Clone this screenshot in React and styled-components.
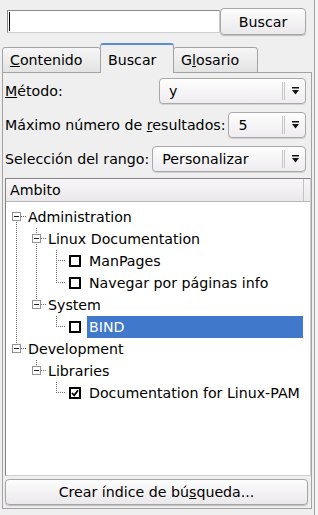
import styled, { createGlobalStyle } from "styled-components";

const GlobalStyle = createGlobalStyle`
  html, body {
    margin: 0;
    padding: 0;
    background: #efefef;
  }
  body {
    font-family: "DejaVu Sans", Verdana, sans-serif;
    font-size: 14.2px;
    color: #000;
  }
`;

const Page = styled.div`
  display: flex;
  width: 318px;
  height: 515px;
  overflow: hidden;
  background: #efefef;
`;
const Main = styled.div`
  width: 314px;
  height: 100%;
  display: flex;
  flex-direction: column;
  padding-left: 2px;
  box-sizing: border-box;
`;
const Splitter = styled.div`
  flex: 1;
  border-left: 1px solid #a3a3a3;
  background: #f4f4f4;
`;

const SearchRow = styled.div`
  display: flex;
  align-items: center;
  margin-top: 8px;
  padding-left: 5px;
  height: 27px;
`;
const SearchInput = styled.div`
  width: 213px;
  height: 23px;
  box-sizing: border-box;
  background: #fff;
  border: 1px solid;
  border-color: #8a8a8a #cfcfcf #cfcfcf #8a8a8a;
  padding-left: 1px;
  display: flex;
  align-items: center;
`;
const Caret = styled.span`
  width: 1px;
  height: 19px;
  background: #000;
`;
const Button = styled.button`
  width: ${(p) => p.$w || "auto"};
  height: ${(p) => p.$h || 27}px;
  box-sizing: border-box;
  border: 1px solid #a6a6a6;
  border-radius: 4px;
  background: linear-gradient(#fdfdfd, #ebe8eb);
  box-shadow: 0 1px 1px rgba(0, 0, 0, 0.22);
  font: inherit;
  color: #000;
  padding: 0;
`;

const TabBar = styled.div`
  display: flex;
  align-items: flex-end;
  margin-top: 8px;
  height: 30px;
  margin-bottom: -1px;
  position: relative;
  z-index: 1;
`;
const Tab = styled.div`
  width: ${(p) => p.$w}px;
  box-sizing: border-box;
  margin-left: ${(p) => (p.$first ? 0 : -1)}px;
  padding-left: 7px;
  line-height: 24px;
  border: 1px solid #a3a3a3;
  border-radius: 3px 3px 0 0;
  background: linear-gradient(#f6f6f6, #e3e3e3);
  white-space: nowrap;

  ${(p) =>
    p.$active &&
    `
    border-top: 2px solid #5a8edb;
    border-bottom: none;
    padding-top: 3px;
    padding-bottom: 1px;
    background: #efefef;
    position: relative;
    z-index: 2;
  `}
`;

const Panel = styled.div`
  flex: 1;
  width: 310px;
  margin-bottom: 6px;
  box-sizing: border-box;
  border: 1px solid #a3a3a3;
  padding: 5px 0 3px 2px;
  display: flex;
  flex-direction: column;
`;
const Form = styled.div`
  display: flex;
  flex-direction: column;
  gap: 8px;
`;
const FormRow = styled.div`
  display: flex;
  align-items: center;
  height: 26px;
`;
const Label = styled.span`
  white-space: nowrap;
`;
const Acc = styled.span`
  text-decoration: underline;
`;
const Combo = styled.div`
  display: flex;
  align-items: center;
  height: 26px;
  box-sizing: border-box;
  margin-left: ${(p) => (p.$w ? "auto" : "3px")};
  margin-right: 5px;
  width: ${(p) => (p.$w ? `${p.$w}px` : "auto")};
  flex: ${(p) => (p.$w ? "none" : 1)};
  border: 1px solid #a8a8a8;
  border-radius: 4px;
  background: linear-gradient(#fefefe, #efecef);
  box-shadow: 0 1px 0 rgba(0, 0, 0, 0.12);
  padding-left: 9px;
`;
const ComboText = styled.span`
  flex: 1;
  white-space: nowrap;
`;
const ComboSep = styled.span`
  width: 1px;
  height: 18px;
  border-left: 1px solid #c6c6c6;
  border-right: 1px solid #c6c6c6;
`;
const ArrowBox = styled.span`
  width: 20px;
  display: flex;
  justify-content: center;
  align-items: center;
`;

const ListView = styled.div`
  flex: 1;
  margin-top: 6px;
  border: 1px solid;
  border-color: #848484 #cfcfcf #cfcfcf #848484;
  background: #fff;
  display: flex;
  flex-direction: column;
  overflow: hidden;
`;
const ListHeader = styled.div`
  display: flex;
  height: 22px;
  border-bottom: 1px solid #b9b9b9;
  background: linear-gradient(#f8f6f8, #ebe8eb);
`;
const HeaderCell = styled.div`
  flex: 1;
  padding-left: 4px;
  line-height: 22px;
  border-right: 1px solid #c2c2c2;
`;
const HeaderFill = styled.div`
  width: 6px;
`;
const TreeBody = styled.div`
  padding-top: 4px;
`;
const TreeRow = styled.div`
  display: flex;
  align-items: center;
  height: 22px;
`;
const Check = styled.span`
  width: 12px;
  height: 12px;
  box-sizing: border-box;
  border: 2px solid #000;
  background: #fff;
  margin-left: 3px;
  flex-shrink: 0;
  display: flex;
  align-items: center;
  justify-content: center;
`;
const ItemText = styled.span`
  line-height: 22px;
  white-space: nowrap;
  margin-left: ${(p) => (p.$leaf ? 6 : 2)}px;
  margin-right: 7px;
  padding: 0 2px 0 ${(p) => (p.$leaf ? 2 : 0)}px;
  flex: ${(p) => (p.$sel ? 1 : "none")};
  background: ${(p) => (p.$sel ? "#4078cb" : "transparent")};
  color: ${(p) => (p.$sel ? "#fff" : "#000")};
`;
const BottomButton = styled(Button)`
  margin-top: 3px;
  margin-right: 3px;
`;

const DOT = "#666";

const Branch = ({ kind, up, down }) => (
  <svg width="20" height="22" style={{ flexShrink: 0, display: "block" }}>
    {kind === "guide" && (
      <line x1="10.5" y1="0" x2="10.5" y2="22" stroke={DOT} strokeDasharray="1 1" />
    )}
    {kind === "open" && (
      <>
        {up && <line x1="10.5" y1="0" x2="10.5" y2="6" stroke={DOT} strokeDasharray="1 1" />}
        {down && <line x1="10.5" y1="16" x2="10.5" y2="22" stroke={DOT} strokeDasharray="1 1" />}
        <line x1="15" y1="10.5" x2="20" y2="10.5" stroke={DOT} strokeDasharray="1 1" />
        <rect x="6.5" y="6.5" width="8" height="8" fill="#fff" stroke="#939393" />
        <line x1="8" y1="10.5" x2="13" y2="10.5" stroke="#222" />
      </>
    )}
    {kind === "leaf" && (
      <>
        <line x1="10.5" y1="0" x2="10.5" y2={down ? 22 : 11} stroke={DOT} strokeDasharray="1 1" />
        <line x1="12" y1="10.5" x2="20" y2="10.5" stroke={DOT} strokeDasharray="1 1" />
      </>
    )}
  </svg>
);

const DownArrow = () => (
  <svg width="7" height="8" viewBox="0 0 7 8">
    <rect x="0" y="0" width="7" height="1.5" fill="#111" />
    <polygon points="0,3 7,3 3.5,7.5" fill="#111" />
  </svg>
);

const CheckMark = () => (
  <svg width="8" height="8" viewBox="0 0 8 8">
    <polyline points="1,4 3.2,6.3 7,1.3" fill="none" stroke="#000" strokeWidth="1.8" />
  </svg>
);

const tree = [
  { guides: [], kind: "open", up: false, down: true, label: "Administration" },
  { guides: [true], kind: "open", up: true, down: true, label: "Linux Documentation" },
  { guides: [true, true], kind: "leaf", down: true, label: "ManPages" },
  { guides: [true, true], kind: "leaf", down: false, label: "Navegar por páginas info" },
  { guides: [true], kind: "open", up: true, down: false, label: "System" },
  { guides: [true, false], kind: "leaf", down: false, label: "BIND", selected: true },
  { guides: [], kind: "open", up: true, down: false, label: "Development" },
  { guides: [false], kind: "open", up: true, down: false, label: "Libraries" },
  { guides: [false, false], kind: "leaf", down: false, label: "Documentation for Linux-PAM", checked: true },
];

const Select = ({ value, w }) => (
  <Combo $w={w}>
    <ComboText>{value}</ComboText>
    <ComboSep />
    <ArrowBox>
      <DownArrow />
    </ArrowBox>
  </Combo>
);

const App = () => {
  return (
    <>
      <GlobalStyle />
      <Page>
        <Main>
          <SearchRow>
            <SearchInput>
              <Caret />
            </SearchInput>
            <Button $w="86px">Buscar</Button>
          </SearchRow>

          <TabBar>
            <Tab $w={99} $first>
              <Acc>C</Acc>ontenido
            </Tab>
            <Tab $w={74} $active>
              Buscar
            </Tab>
            <Tab $w={85}>
              G<Acc>l</Acc>osario
            </Tab>
          </TabBar>

          <Panel>
            <Form>
              <FormRow>
                <Label>
                  <Acc>M</Acc>étodo:
                </Label>
                <Select value="y" w={147} />
              </FormRow>
              <FormRow>
                <Label>
                  Máximo número de <Acc>r</Acc>esultados:
                </Label>
                <Select value="5" />
              </FormRow>
              <FormRow>
                <Label>Selección del rango:</Label>
                <Select value="Personalizar" />
              </FormRow>
            </Form>

            <ListView>
              <ListHeader>
                <HeaderCell>Ambito</HeaderCell>
                <HeaderFill />
              </ListHeader>
              <TreeBody>
                {tree.map((n, i) => (
                  <TreeRow key={i}>
                    {n.guides.map((g, j) => (
                      <Branch key={j} kind={g ? "guide" : "blank"} />
                    ))}
                    <Branch kind={n.kind} up={n.up} down={n.down} />
                    {n.kind === "leaf" && <Check>{n.checked && <CheckMark />}</Check>}
                    <ItemText $leaf={n.kind === "leaf"} $sel={n.selected}>
                      {n.label}
                    </ItemText>
                  </TreeRow>
                ))}
              </TreeBody>
            </ListView>

            <BottomButton $h={26}>
              Crear índice de bú<Acc>s</Acc>queda...
            </BottomButton>
          </Panel>
        </Main>
        <Splitter />
      </Page>
    </>
  );
};

export default App;
